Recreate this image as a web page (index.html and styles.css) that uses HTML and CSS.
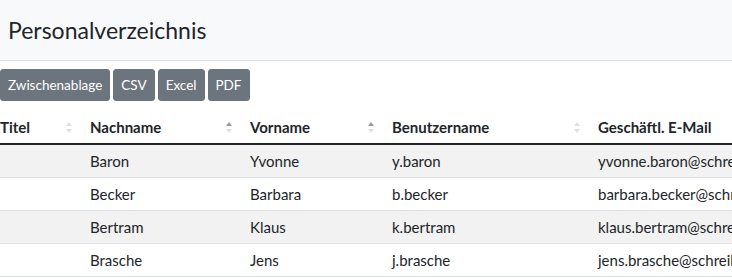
FILE: index.html
```html
<!DOCTYPE html>
<html lang="de">
<head>
    <meta charset="UTF-8">
    <meta name="viewport" content="width=device-width, initial-scale=1.0">
    <title>Personalverzeichnis</title>
    <link rel="stylesheet" href="styles.css">
</head>
<body>
    <div class="page-header">
        <h1>Personalverzeichnis</h1>
    </div>

    <div class="content">
        <div class="dt-buttons">
            <button class="btn">Zwischenablage</button>
            <button class="btn">CSV</button>
            <button class="btn">Excel</button>
            <button class="btn">PDF</button>
        </div>

        <table class="staff-table">
            <colgroup>
                <col class="col-titel">
                <col class="col-nachname">
                <col class="col-vorname">
                <col class="col-user">
                <col class="col-mail">
            </colgroup>
            <thead>
                <tr>
                    <th class="sorting">Titel</th>
                    <th class="sorting sorting-asc">Nachname</th>
                    <th class="sorting sorting-asc">Vorname</th>
                    <th class="sorting">Benutzername</th>
                    <th class="sorting">Geschäftl. E-Mail</th>
                </tr>
            </thead>
            <tbody>
                <tr>
                    <td></td>
                    <td>Baron</td>
                    <td>Yvonne</td>
                    <td>y.baron</td>
                    <td>yvonne.baron@schreiber-online.de</td>
                </tr>
                <tr>
                    <td></td>
                    <td>Becker</td>
                    <td>Barbara</td>
                    <td>b.becker</td>
                    <td>barbara.becker@schreiber-online.de</td>
                </tr>
                <tr>
                    <td></td>
                    <td>Bertram</td>
                    <td>Klaus</td>
                    <td>k.bertram</td>
                    <td>klaus.bertram@schreiber-online.de</td>
                </tr>
                <tr>
                    <td></td>
                    <td>Brasche</td>
                    <td>Jens</td>
                    <td>j.brasche</td>
                    <td>jens.brasche@schreiber-online.de</td>
                </tr>
            </tbody>
        </table>
    </div>
</body>
</html>
```

FILE: styles.css
```css
body {
    margin: 0;
    font-family: Lato, "Open Sans", sans-serif;
    color: #212529;
    background: #ffffff;
    overflow: hidden;
}

.page-header {
    background: #f8f9fa;
    border-bottom: 1px solid #dee2e6;
    height: 60px;
    padding: 0 8px;
    display: flex;
    align-items: center;
}

h1 {
    margin: 0;
    font-size: 23px;
    font-weight: 400;
}

.content {
    padding-top: 8px;
}

.dt-buttons {
    display: flex;
    gap: 3px;
    margin-bottom: 10px;
}

.btn {
    background: #6c757d;
    border: 1px solid #6c757d;
    color: #ffffff;
    font-family: inherit;
    font-size: 13.5px;
    height: 32px;
    padding: 0 7px;
    border-radius: 3px;
}

.staff-table {
    border-collapse: collapse;
    table-layout: fixed;
    width: 900px;
    font-size: 15px;
}

.col-titel { width: 80px; }
.col-nachname { width: 160px; }
.col-vorname { width: 142px; }
.col-user { width: 206px; }
.col-mail { width: 312px; }

th, td {
    text-align: left;
    padding: 0 10px;
    white-space: nowrap;
    overflow: hidden;
}

th:first-child, td:first-child {
    padding-left: 0;
}

th {
    font-weight: 700;
    height: 32px;
    border-bottom: 2px solid #212529;
}

td {
    height: 32px;
    border-bottom: 1px solid #dee2e6;
}

tbody tr:nth-child(odd) {
    background: #f2f2f2;
}

.sorting {
    position: relative;
}

.sorting::before,
.sorting::after {
    content: "";
    position: absolute;
    right: 8px;
    border-left: 3px solid transparent;
    border-right: 3px solid transparent;
}

.sorting::before {
    top: 11px;
    border-bottom: 4px solid #e0e0e0;
}

.sorting::after {
    top: 18px;
    border-top: 4px solid #e0e0e0;
}

.sorting-asc::before {
    border-bottom-color: #9a9a9a;
}
```
